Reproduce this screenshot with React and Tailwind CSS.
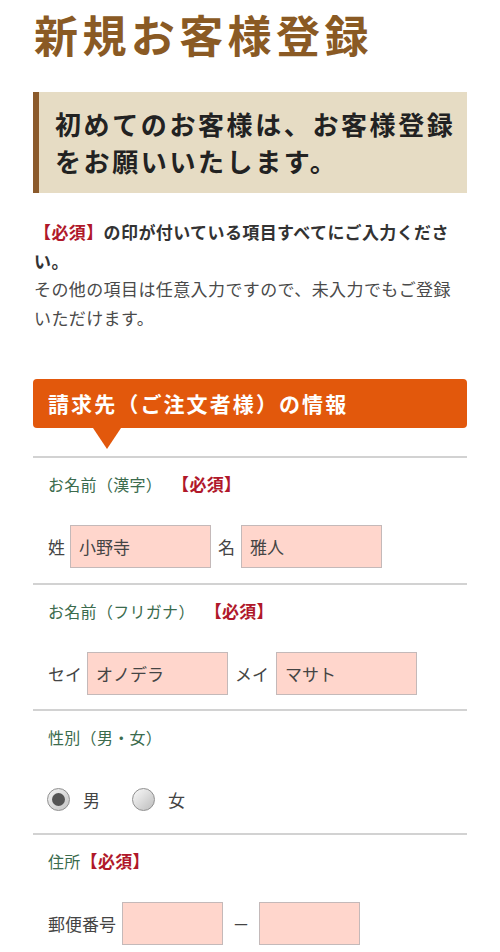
export default function App() {
  const inputCls =
    "h-[43px] bg-[#ffd6cc] border border-[#c4b9b9] px-[8px] text-[17px] text-[#444] outline-none";
  return (
    <div className="w-[500px] min-h-[952px] bg-white px-[33px] font-['Noto_Sans_CJK_JP','Noto_Sans',sans-serif]">
      <h1 className="text-[44px] font-bold leading-[68px] tracking-[4.4px] text-[#8a5a24] pl-[1px]">
        新規お客様登録
      </h1>

      <div className="mt-[24px] border-l-[6px] border-[#8b5a2b] bg-[#e6dcc4] pl-[16px] pr-[6px] pt-[13px] pb-[14px] text-[26px] font-bold leading-[37px] tracking-[0.1em] text-[#222]">
        初めてのお客様は、お客様登録をお願いいたします。
      </div>

      <p className="mt-[25px] text-[17px] leading-[28.5px] tracking-[0.4px] text-[#4a4a4a] pl-[1px]">
        <span className="font-bold text-[#333]">
          <span className="text-[#b0182a]">【必須】</span>の印が付いている項目すべてにご入力ください。
        </span>
        <br />
        その他の項目は任意入力ですので、未入力でもご登録いただけます。
      </p>

      <div className="relative mt-[47px] flex h-[49px] items-center rounded-[4px] bg-[#e2580c] pl-[15px] text-[21px] font-bold tracking-[0.1em] text-white">
        請求先（ご注文者様）の情報
        <div className="absolute left-[60px] top-full h-0 w-0 border-l-[14px] border-r-[14px] border-t-[21px] border-l-transparent border-r-transparent border-t-[#e2580c]" />
      </div>

      <div className="mt-[28px]">
        <section className="border-t-2 border-[#d2d2d2] px-[15px] pt-[14px] pb-[15px]">
          <div className="flex items-center text-[16px] leading-6 tracking-[0.3px] text-[#3b6b4d]">
            お名前（漢字）
            <span className="ml-[10px] text-[17px] font-bold text-[#b0182a]">【必須】</span>
          </div>
          <div className="mt-[29px] flex items-center text-[17px] text-[#444]">
            <span>姓</span>
            <input className={`${inputCls} ml-[5px] w-[141px]`} defaultValue="小野寺" readOnly />
            <span className="ml-[7px]">名</span>
            <input className={`${inputCls} ml-[6px] w-[141px]`} defaultValue="雅人" readOnly />
          </div>
        </section>

        <section className="border-t-2 border-[#d2d2d2] px-[15px] pt-[14px] pb-[14px]">
          <div className="flex items-center text-[16px] leading-6 tracking-[0.3px] text-[#3b6b4d]">
            お名前（フリガナ）
            <span className="ml-[10px] text-[17px] font-bold text-[#b0182a]">【必須】</span>
          </div>
          <div className="mt-[29px] flex items-center text-[17px] text-[#444]">
            <span>セイ</span>
            <input className={`${inputCls} ml-[5px] w-[141px]`} defaultValue="オノデラ" readOnly />
            <span className="ml-[7px]">メイ</span>
            <input className={`${inputCls} ml-[7px] w-[141px]`} defaultValue="マサト" readOnly />
          </div>
        </section>

        <section className="border-t-2 border-[#d2d2d2] px-[15px] pt-[14px] pb-[12px]">
          <div className="flex items-center text-[16px] leading-6 tracking-[0.3px] text-[#3b6b4d]">
            性別（男・女）
          </div>
          <div className="mt-[29px] flex h-[43px] items-center text-[17px] text-[#444]">
            <span className="-ml-[1px] flex h-[23px] w-[23px] items-center justify-center rounded-full border border-[#8f8f8f] bg-linear-to-br from-[#f4f4f4] to-[#c4c4c4]">
              <span className="h-[13px] w-[13px] rounded-full bg-[#555]" />
            </span>
            <span className="ml-[13px]">男</span>
            <span className="ml-[32px] h-[23px] w-[23px] rounded-full border border-[#8f8f8f] bg-linear-to-br from-[#fafafa] to-[#bdbdbd]" />
            <span className="ml-[13px]">女</span>
          </div>
        </section>

        <section className="border-t-2 border-[#d2d2d2] px-[15px] pt-[14px] pb-[15px]">
          <div className="flex items-center text-[16px] leading-6 tracking-[0.3px] text-[#3b6b4d]">
            住所
            <span className="text-[17px] font-bold text-[#b0182a]">【必須】</span>
          </div>
          <div className="mt-[29px] flex items-center text-[17px] text-[#444]">
            <span>郵便番号</span>
            <input className={`${inputCls} ml-[6px] w-[101px]`} readOnly />
            <span className="w-[36px] text-center">－</span>
            <input className={`${inputCls} w-[101px]`} readOnly />
          </div>
        </section>
      </div>
    </div>
  );
}
